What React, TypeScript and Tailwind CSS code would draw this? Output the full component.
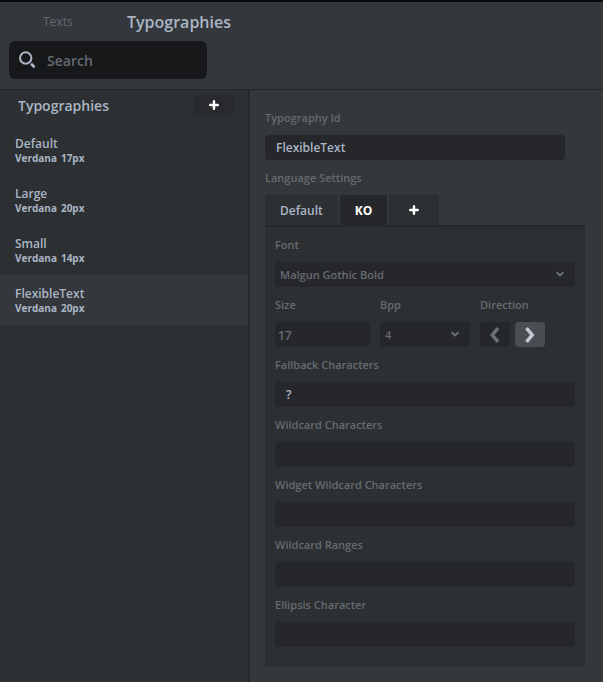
import { useState } from "react";

const typographies = [
  { name: "Default", font: "Verdana", size: "17px" },
  { name: "Large", font: "Verdana", size: "20px" },
  { name: "Small", font: "Verdana", size: "14px" },
  { name: "FlexibleText", font: "Verdana", size: "20px" },
];

const characterFields = [
  { id: "fallback", label: "Fallback Characters", value: "?" },
  { id: "wildcard", label: "Wildcard Characters", value: "" },
  { id: "widget-wildcard", label: "Widget Wildcard Characters", value: "" },
  { id: "wildcard-ranges", label: "Wildcard Ranges", value: "" },
  { id: "ellipsis", label: "Ellipsis Character", value: "" },
];

const labelClass = "block h-5 text-[11px] leading-5 font-semibold text-[#666b71]";
const inputClass = "block h-[25px] w-full rounded bg-[#26272b] text-xs font-semibold outline-none";

const PlusIcon = () => (
  <svg width="10" height="10" viewBox="0 0 10 10" fill="none" stroke="#fff" strokeWidth="2.4" strokeLinecap="round">
    <path d="M5 1.2v7.6M1.2 5h7.6" />
  </svg>
);

const SearchIcon = () => (
  <svg width="18" height="18" viewBox="0 0 18 18" fill="none" stroke="#aab6c5">
    <circle cx="6.7" cy="7" r="5.7" strokeWidth="2" />
    <path d="M12.9 13.6l1.8 1.8" strokeWidth="2.8" strokeLinecap="round" />
  </svg>
);

const SelectField = ({ id, label, value, className }: { id: string; label: string; value: string; className: string }) => (
  <div className={className}>
    <label htmlFor={id} className={labelClass}>{label}</label>
    <div className="relative mt-[7px]">
      <select
        id={id}
        defaultValue={value}
        className="block h-[25px] w-full appearance-none rounded bg-[#26272b] px-[5px] pt-px text-[11px] font-semibold text-[#666b71] outline-none"
      >
        <option>{value}</option>
      </select>
      <svg className="pointer-events-none absolute top-[9px] right-[11px]" width="8" height="6" viewBox="0 0 8 6" fill="none" stroke="#6b7178" strokeWidth="2">
        <path d="M.5 1.2L4 4.4l3.5-3.2" />
      </svg>
    </div>
  </div>
);

const Header = () => (
  <header className="border-t-2 border-b border-t-[#08090b] border-b-[#26272b] pb-[10px]">
    <nav className="flex h-[39px] items-center pl-[43px]">
      <a href="#texts" className="w-[84px] text-xs font-medium text-[#666b71]">Texts</a>
      <a href="#typographies" className="text-base font-semibold text-[#aab6c5]">Typographies</a>
    </nav>
    <div className="ml-[9px] flex h-[38px] w-[198px] items-center gap-[10px] rounded-md bg-[#17181a] pl-[10px]">
      <SearchIcon />
      <input
        type="text"
        aria-label="Search"
        placeholder="Search"
        className="min-w-0 flex-1 bg-transparent pt-[2px] text-sm font-semibold text-[#aab6c5] outline-none placeholder:text-[#666b71]"
      />
    </div>
  </header>
);

const Sidebar = () => {
  const [selected, setSelected] = useState("FlexibleText");

  return (
    <aside className="w-[250px] shrink-0 border-r-2 border-[#26272b] bg-[#2c3032]">
      <div className="flex h-[35px] items-start justify-between pt-[5px] pr-[14px] pl-[18px]">
        <h2 className="text-sm leading-[22px] font-semibold text-[#aab6c5]">Typographies</h2>
        <button aria-label="Add typography" className="flex h-5 w-10 items-center justify-center rounded bg-[#282a2d]">
          <PlusIcon />
        </button>
      </div>
      <ul>
        {typographies.map((item) => (
          <li key={item.name}>
            <button
              onClick={() => setSelected(item.name)}
              className={`flex h-[50px] w-full flex-col items-start justify-center px-[15px] text-left font-semibold text-[#aab6c5] ${
                item.name === selected ? "bg-[#34373b]" : ""
              }`}
            >
              <span className="text-xs leading-4">{item.name}</span>
              <span className="flex gap-1 text-[10px] leading-3 font-bold">
                <span>{item.font}</span>
                <span>{item.size}</span>
              </span>
            </button>
          </li>
        ))}
      </ul>
    </aside>
  );
};

const LanguagePanel = () => {
  const [direction, setDirection] = useState("rtl");

  return (
    <div className="flex flex-col gap-2 border-t-2 border-[#26272b] bg-[#2c3032] px-[10px] pt-2 pb-5">
      <SelectField id="font" label="Font" value="Malgun Gothic Bold" className="w-full" />
      <div className="flex gap-[10px]">
        <div className="w-[95px]">
          <label htmlFor="size" className={labelClass}>Size</label>
          <input id="size" type="text" defaultValue="17" className={`${inputClass} mt-[7px] px-[3px] pt-px text-[#666b71]`} />
        </div>
        <SelectField id="bpp" label="Bpp" value="4" className="w-[90px]" />
        <div role="group" aria-labelledby="direction">
          <span id="direction" className={labelClass}>Direction</span>
          <div className="mt-[7px] flex gap-[5px]">
            <button
              aria-label="Left"
              onClick={() => setDirection("ltr")}
              className={`flex h-[25px] w-[30px] items-center justify-center rounded ${direction === "ltr" ? "bg-[#4a4d52] text-[#c3cad3]" : "bg-[#26272b] text-[#6b7178]"}`}
            >
              <svg width="10" height="16" viewBox="0 0 10 16" fill="none" stroke="currentColor" strokeWidth="3.5">
                <path d="M8 1.2L2.3 8 8 14.8" />
              </svg>
            </button>
            <button
              aria-label="Right"
              onClick={() => setDirection("rtl")}
              className={`flex h-[25px] w-[30px] items-center justify-center rounded ${direction === "rtl" ? "bg-[#4a4d52] text-[#c3cad3]" : "bg-[#26272b] text-[#6b7178]"}`}
            >
              <svg width="10" height="16" viewBox="0 0 10 16" fill="none" stroke="currentColor" strokeWidth="3.5">
                <path d="M1.5 1.2L7.2 8l-5.7 6.8" />
              </svg>
            </button>
          </div>
        </div>
      </div>
      {characterFields.map((field) => (
        <div key={field.id}>
          <label htmlFor={field.id} className={labelClass}>{field.label}</label>
          <input id={field.id} type="text" defaultValue={field.value} className={`${inputClass} mt-[7px] px-[11px] text-[#aab6c5]`} />
        </div>
      ))}
    </div>
  );
};

const App = () => {
  return (
    <div className="flex min-h-screen flex-col bg-[#34373b] font-['Open_Sans',sans-serif]">
      <Header />
      <div className="flex flex-1">
        <Sidebar />
        <main className="min-w-0 flex-1 pt-[18px] pr-[18px] pb-[15px] pl-[15px]">
          <div className="mb-2 pr-5">
            <label htmlFor="typography-id" className={labelClass}>Typography Id</label>
            <input id="typography-id" type="text" defaultValue="FlexibleText" className={`${inputClass} mt-[7px] px-[11px] text-[#aab6c5]`} />
          </div>
          <h3 className={labelClass}>Language Settings</h3>
          <div className="mt-[7px] flex h-[30px] gap-[2px] text-xs font-semibold">
            <button className="bg-[#2c3032] px-[15px] pt-px text-[#aab6c5]">Default</button>
            <button className="bg-[#26272b] px-[15px] pt-px font-bold text-white">KO</button>
            <button aria-label="Add language" className="flex w-[50px] items-center justify-center bg-[#2c3032]">
              <PlusIcon />
            </button>
          </div>
          <LanguagePanel />
        </main>
      </div>
    </div>
  );
};

export default App;
